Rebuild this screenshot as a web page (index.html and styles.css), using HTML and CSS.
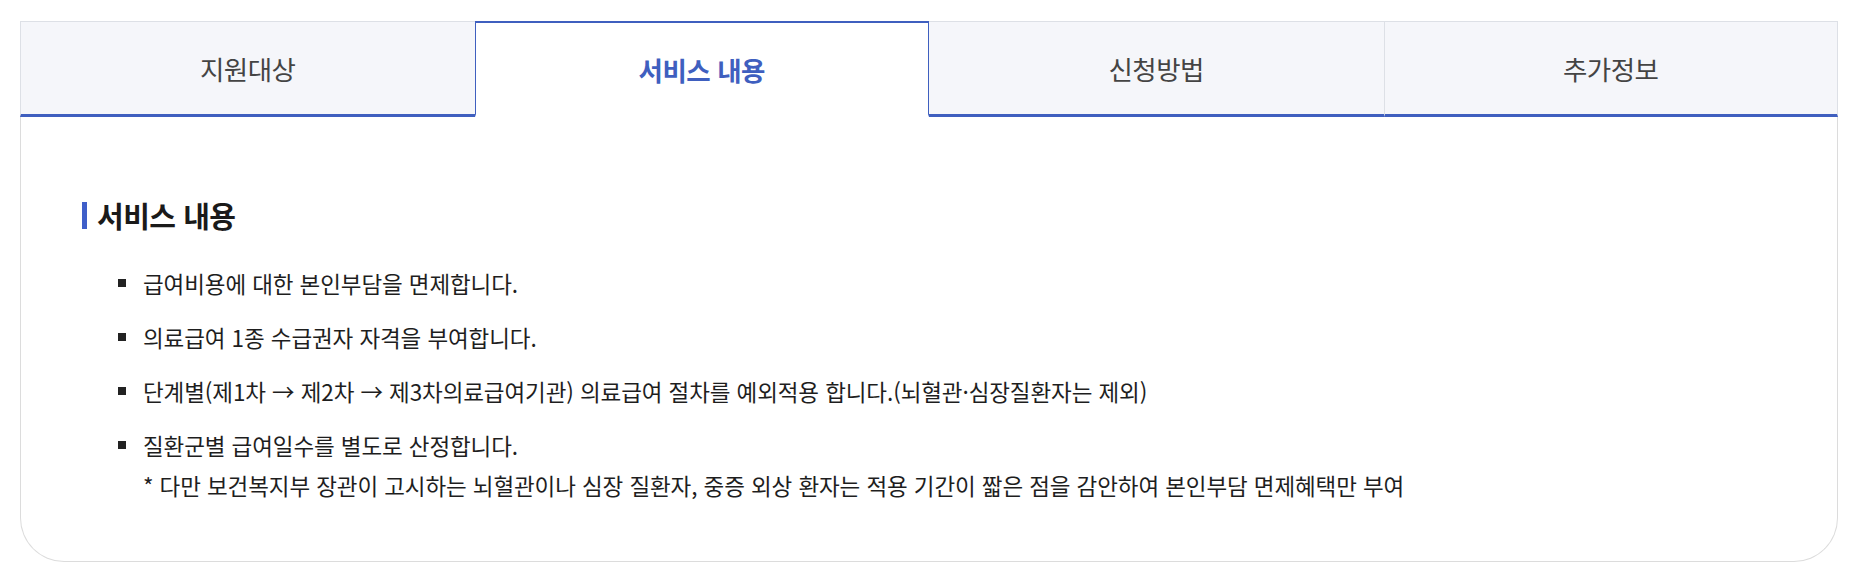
FILE: index.html
```html
<!DOCTYPE html>
<html lang="ko">
<head>
<meta charset="utf-8">
<title>서비스 내용</title>
<link rel="stylesheet" href="styles.css">
</head>
<body>
<div class="panel">
  <div class="tabs">
    <div class="tab">지원대상</div>
    <div class="tab active">서비스 내용</div>
    <div class="tab">신청방법</div>
    <div class="tab">추가정보</div>
  </div>
  <div class="content">
    <h3 class="title">서비스 내용</h3>
    <ul class="list">
      <li class="item"><div class="text">급여비용에 대한 본인부담을 면제합니다.</div></li>
      <li class="item"><div class="text">의료급여 1종 수급권자 자격을 부여합니다.</div></li>
      <li class="item"><div class="text">단계별(제1차 → 제2차 → 제3차의료급여기관) 의료급여 절차를 예외적용 합니다.(뇌혈관·심장질환자는 제외)</div></li>
      <li class="item"><div class="text">질환군별 급여일수를 별도로 산정합니다.<br>* 다만 보건복지부 장관이 고시하는 뇌혈관이나 심장 질환자, 중증 외상 환자는 적용 기간이 짧은 점을 감안하여 본인부담 면제혜택만 부여</div></li>
    </ul>
  </div>
</div>
</body>
</html>
```

FILE: styles.css
```css
* { box-sizing: border-box; }
html, body { margin: 0; padding: 0; background: #ffffff; }
body {
  font-family: "Noto Sans CJK KR", "Noto Sans", sans-serif;
  color: #222;
}
.panel {
  width: 1818px;
  margin: 21px 0 0 20px;
}
.tabs {
  display: grid;
  grid-template-columns: repeat(4, 1fr);
  height: 96px;
}
.tab {
  display: flex;
  align-items: center;
  justify-content: center;
  background: #f5f6fa;
  border-top: 1px solid #dde0e6;
  border-left: 1px solid #dde0e6;
  border-bottom: 3px solid #3f5fbf;
  font-size: 26.5px;
  color: #444;
  letter-spacing: -0.5px;
  padding-top: 1px;
}
.tab:last-child { border-right: 1px solid #dde0e6; }
.tab.active {
  background: #fff;
  border-top: 2px solid #3f5fbf;
  border-left: 1px solid #3f5fbf;
  border-right: 1px solid #3f5fbf;
  border-bottom: 3px solid #fff;
  color: #3f5fbf;
  font-weight: 700;
  padding-top: 2px;
}
.tab.active + .tab { border-left: none; }
.content {
  height: 445px;
  border: 1px solid #dcdcdc;
  border-top: none;
  border-radius: 0 0 44px 44px;
  padding: 85px 0 0 61px;
}
.title {
  margin: 0;
  display: flex;
  align-items: center;
  height: 26px;
  font-size: 29px;
  font-weight: 700;
  color: #1a1a1a;
  letter-spacing: -0.5px;
}
.title::before {
  content: "";
  width: 5px;
  height: 27px;
  background: #3f5fc9;
  margin-right: 10px;
}
.list {
  list-style: none;
  margin: 35px 0 0 0;
  padding: 0 0 0 36px;
  display: flex;
  flex-direction: column;
  gap: 14px;
}
.item {
  display: flex;
  align-items: flex-start;
  font-size: 22.5px;
  line-height: 40px;
  color: #1e1e1e;
  letter-spacing: -0.1px;
}
.item::before {
  content: "";
  flex: none;
  width: 8px;
  height: 8px;
  background: #222;
  margin: 16px 17px 0 0;
}
```
